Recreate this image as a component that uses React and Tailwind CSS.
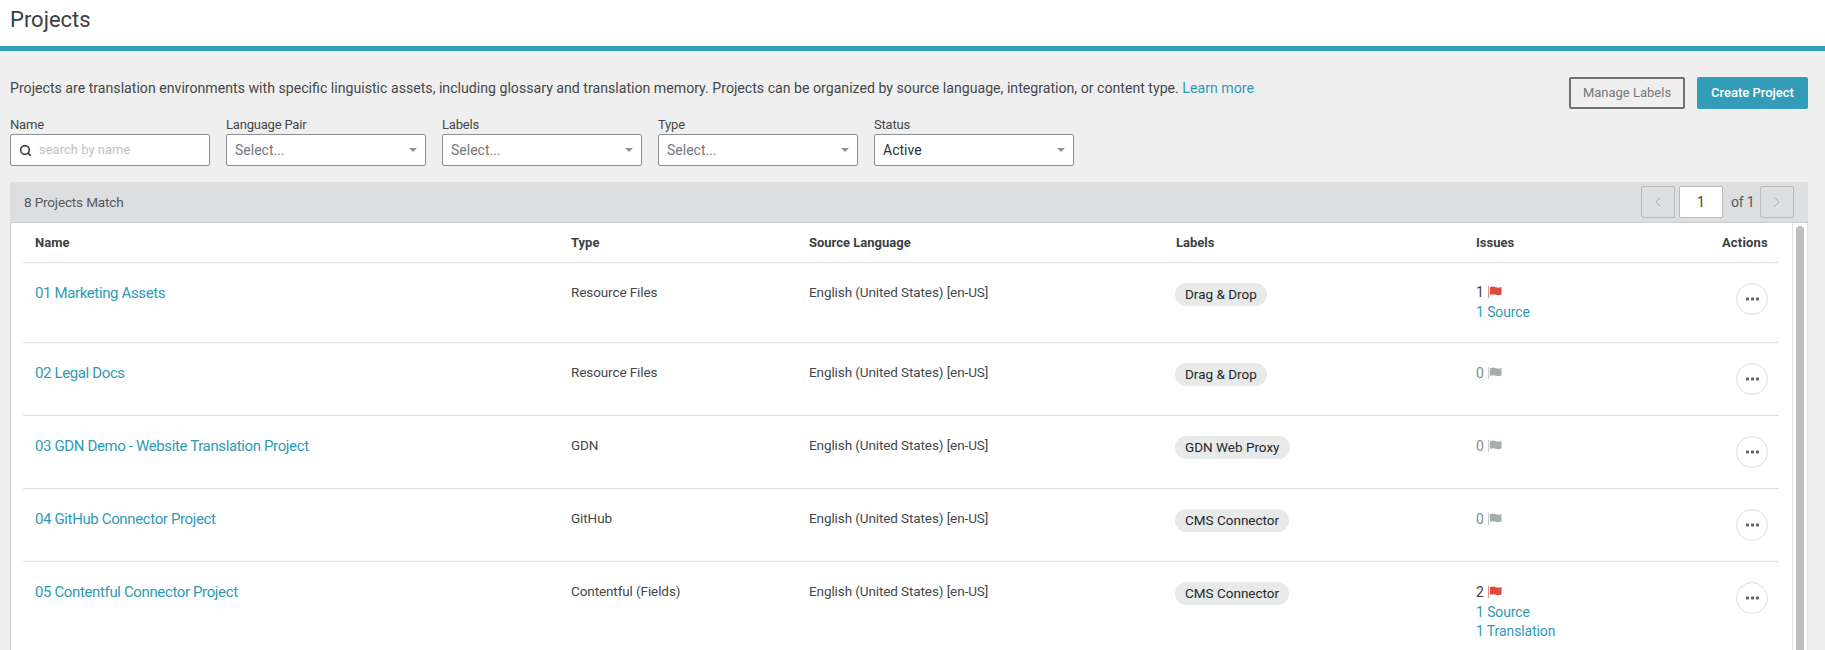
import React from 'react'
import { Search, ChevronLeft, ChevronRight } from 'lucide-react'

const projects = [
  { name: '01 Marketing Assets', type: 'Resource Files', label: 'Drag & Drop', issues: 1, links: ['1 Source'], height: 'h-[80px]', issuesTop: 'pt-[19px]' },
  { name: '02 Legal Docs', type: 'Resource Files', label: 'Drag & Drop', issues: 0, links: [], height: 'h-[73px]', issuesTop: 'pt-[20px]' },
  { name: '03 GDN Demo - Website Translation Project', type: 'GDN', label: 'GDN Web Proxy', issues: 0, links: [], height: 'h-[73px]', issuesTop: 'pt-[20px]' },
  { name: '04 GitHub Connector Project', type: 'GitHub', label: 'CMS Connector', issues: 0, links: [], height: 'h-[73px]', issuesTop: 'pt-[20px]' },
  { name: '05 Contentful Connector Project', type: 'Contentful (Fields)', label: 'CMS Connector', issues: 2, links: ['1 Source', '1 Translation'], height: 'h-[100px]', issuesTop: 'pt-[20px]' },
]

function Flag({ active }) {
  const fill = active ? '#dd4b3e' : '#a5aeae'
  return (
    <svg width="15" height="12" viewBox="0 0 15 12" className="ml-[4px]">
      <rect x="0" y="0" width="1.200" height="12" fill={fill} opacity="0.6" />
      <path d="M2 1.200c2.400-1 4-.6 5.800 0s3.400.6 5.700-.2v7.600c-2.300.8-3.900.8-5.700.2s-3.400-1-5.800 0z" fill={fill} />
    </svg>
  )
}

function Caret() {
  return (
    <svg width="8" height="4" viewBox="0 0 8 4" className="shrink-0">
      <path d="M0 0h8L4 4z" fill="#8d9194" />
    </svg>
  )
}

function SelectBox({ label, value }) {
  return (
    <div className="w-[200px]">
      <div className="pt-[1px] text-[13px] tracking-[-0.2px] leading-[16px] text-[#44484b] mb-[1px]">{label}</div>
      <div className="h-[32px] bg-white border border-[#8b8f92] rounded-[2px] pl-[8px] pr-[8px] flex items-center justify-between">
        <span className={value ? 'text-[14px] text-[#2f3336]' : 'text-[14px] text-[#74787b]'}>{value || 'Select...'}</span>
        <Caret />
      </div>
    </div>
  )
}

function Row({ project }) {
  return (
    <div className={`${project.height} border-b border-[#dcdedf] pl-[12px] grid grid-cols-[536px_238px_367px_300px_200px_1fr] shrink-0`}>
      <div className="pt-[19px] text-[15px] tracking-[-0.37px] leading-[22px] text-[#2f9ab6]">{project.name}</div>
      <div className="pt-[19px] text-[13.500px] tracking-[-0.1px] leading-[20px] text-[#44484b]">{project.type}</div>
      <div className="pt-[19px] text-[13.500px] tracking-[-0.1px] leading-[20px] text-[#44484b]">English (United States) [en-US]</div>
      <div className="pt-[20px] flex items-start">
        <span className="inline-flex items-center h-[23px] px-[10px] -ml-px rounded-full bg-[#e8e9e9] text-[13.500px] text-[#24282b]">{project.label}</span>
      </div>
      <div className={`${project.issuesTop} text-[14px]`}>
        <div className="flex items-center h-[20px] mb-[1px]">
          <span className={project.issues ? 'text-[#3b3f42]' : 'text-[#85898c]'}>{project.issues}</span>
          <Flag active={project.issues > 0} />
        </div>
        {project.links.map((link) => (
          <div key={link} className="leading-[19px] tracking-[-0.1px] text-[#2f9ab6]">{link}</div>
        ))}
      </div>
      <div className="pt-[20px] pr-[11px] flex justify-end items-start">
        <button className="w-[32px] h-[32px] rounded-full border border-[#dcdedf] bg-white flex items-center justify-center">
          <svg width="13" height="4" viewBox="0 0 13 4">
            <rect x="0" y="0.500" width="3" height="3" rx="0.800" fill="#5d6164" />
            <rect x="5" y="0.500" width="3" height="3" rx="0.800" fill="#5d6164" />
            <rect x="10" y="0.500" width="3" height="3" rx="0.800" fill="#5d6164" />
          </svg>
        </button>
      </div>
    </div>
  )
}

export default function App() {
  return (
    <div className="h-[650px] overflow-hidden bg-[#efefef] flex flex-col font-['Roboto',sans-serif]">
      {/* Page title */}
      <div className="h-[46px] bg-white pl-[10px] pt-[6px] shrink-0">
        <h1 className="text-[22px] leading-[28px] text-[#3b3f42]">Projects</h1>
      </div>
      <div className="h-[5px] bg-[#339cb8] shrink-0" />

      <div className="flex-1 min-h-0 pl-[10px] pr-[17px] flex flex-col">
        {/* Intro and buttons */}
        <div className="flex justify-between items-start pt-[26px] h-[65px] shrink-0">
          <p className="text-[14.150px] leading-[22px] text-[#44484b]">
            Projects are translation environments with specific linguistic assets, including glossary and translation memory. Projects can be organized by source language, integration, or content type. <a className="text-[#2f9ab6]">Learn more</a>
          </p>
          <div className="flex gap-[12px]">
            <button className="h-[32px] w-[116px] border-2 border-[#6d7174] rounded-[2px] text-[13px] text-[#74787b]">Manage Labels</button>
            <button className="h-[32px] w-[111px] bg-[#339cb8] rounded-[2px] text-[13px] font-medium text-white">Create Project</button>
          </div>
        </div>

        {/* Filters */}
        <div className="flex gap-[16px] h-[66px] shrink-0">
          <div className="w-[200px]">
            <div className="pt-[1px] text-[13px] tracking-[-0.2px] leading-[16px] text-[#44484b] mb-[1px]">Name</div>
            <div className="h-[32px] bg-white border border-[#8b8f92] rounded-[2px] pl-[8px] flex items-center gap-[7px]">
              <Search size={13} strokeWidth={3} color="#3b3f42" />
              <input placeholder="search by name" className="flex-1 min-w-0 outline-none text-[13px] placeholder:text-[#bfc2c4]" />
            </div>
          </div>
          <SelectBox label="Language Pair" />
          <SelectBox label="Labels" />
          <SelectBox label="Type" />
          <SelectBox label="Status" value="Active" />
        </div>

        {/* Results bar */}
        <div className="h-[40px] bg-[#dddee0] pl-[14px] pr-[14px] flex items-center justify-between shrink-0">
          <span className="text-[13.500px] tracking-[-0.15px] text-[#55595c]">8 Projects Match</span>
          <div className="flex items-center">
            <button className="w-[34px] h-[32px] border border-[#b7babc] rounded-[2px] flex items-center justify-center">
              <ChevronLeft size={16} strokeWidth={1.500} color="#b0b3b5" />
            </button>
            <input readOnly value="1" className="ml-[4px] w-[44px] h-[32px] bg-white border border-[#b7babc] rounded-[2px] text-center text-[14px] text-[#3b3f42] outline-none" />
            <span className="ml-[8px] w-[29px] text-[14px] tracking-[-0.2px] text-[#55595c]">of 1</span>
            <button className="w-[34px] h-[32px] border border-[#b7babc] rounded-[2px] flex items-center justify-center">
              <ChevronRight size={16} strokeWidth={1.500} color="#b0b3b5" />
            </button>
          </div>
        </div>

        {/* Table */}
        <div className="flex-1 min-h-0 flex bg-white border-t border-l border-[#c8cacc]">
          <div className="flex-1 min-w-0 pl-[12px] pr-[13px] overflow-hidden flex flex-col">
            <div className="h-[40px] border-b border-[#dcdedf] pl-[12px] grid grid-cols-[536px_238px_367px_300px_200px_1fr] items-center shrink-0 text-[13px] font-bold text-[#3b3f42]">
              <div>Name</div>
              <div>Type</div>
              <div>Source Language</div>
              <div>Labels</div>
              <div>Issues</div>
              <div className="text-right pr-[11px] tracking-[0.2px]">Actions</div>
            </div>
            {projects.map((project) => (
              <Row key={project.name} project={project} />
            ))}
          </div>
          {/* Scrollbar */}
          <div className="w-[16px] shrink-0 border-l border-r border-[#e3e4e5] bg-white pt-[3px] flex justify-center">
            <div className="w-[8px] h-full rounded-t-full bg-[#bdbfc0]" />
          </div>
        </div>
      </div>
    </div>
  )
}
